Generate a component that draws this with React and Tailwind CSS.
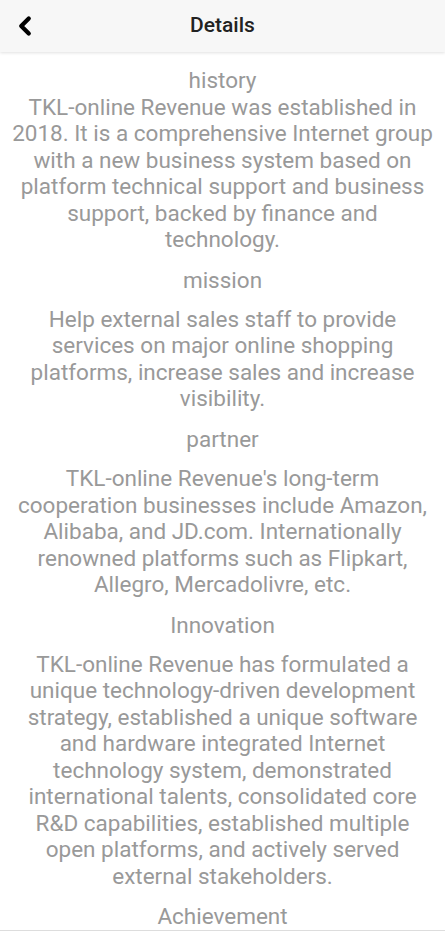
import { ChevronLeft } from "lucide-react";

const sections = [
  {
    title: "mission",
    text: "Help external sales staff to provide services on major online shopping platforms, increase sales and increase visibility.",
  },
  {
    title: "partner",
    text: "TKL-online Revenue's long-term cooperation businesses include Amazon, Alibaba, and JD.com. Internationally renowned platforms such as Flipkart, Allegro, Mercadolivre, etc.",
  },
  {
    title: "Innovation",
    text: "TKL-online Revenue has formulated a unique technology-driven development strategy, established a unique software and hardware integrated Internet technology system, demonstrated international talents, consolidated core R&D capabilities, established multiple open platforms, and actively served external stakeholders.",
  },
];

const App = () => {
  return (
    <div className="w-[445px] h-[936px] overflow-hidden bg-white font-['Roboto',sans-serif] flex flex-col">
      <header className="h-[52px] flex-none flex items-center relative bg-[#f7f7f7] shadow-[0_1px_3px_rgba(0,0,0,0.12)] z-10">
        <button className="absolute left-[10px] top-[11px] text-black">
          <ChevronLeft size={30} strokeWidth={3.4} />
        </button>
        <h1 className="w-full text-center text-[21px] font-medium text-[#222]">Details</h1>
      </header>

      <div className="flex-1 px-2 pt-[15px] text-center text-[#999] text-[22.5px] leading-[26.5px]">
        <p>history</p>
        <p>
          TKL-online Revenue was established in 2018. It is a comprehensive Internet group with a new business system based on platform technical support and business support, backed by finance and technology.
        </p>
        {sections.map((s) => (
          <div key={s.title} className="mt-[14.5px]">
            <p className="mb-[12.25px]">{s.title}</p>
            <p>{s.text}</p>
          </div>
        ))}
        <p className="mt-[13.5px]">Achievement</p>
      </div>
      <div className="h-[6px] flex-none border-t border-[#ddd] bg-white" />
    </div>
  );
};

export default App;
